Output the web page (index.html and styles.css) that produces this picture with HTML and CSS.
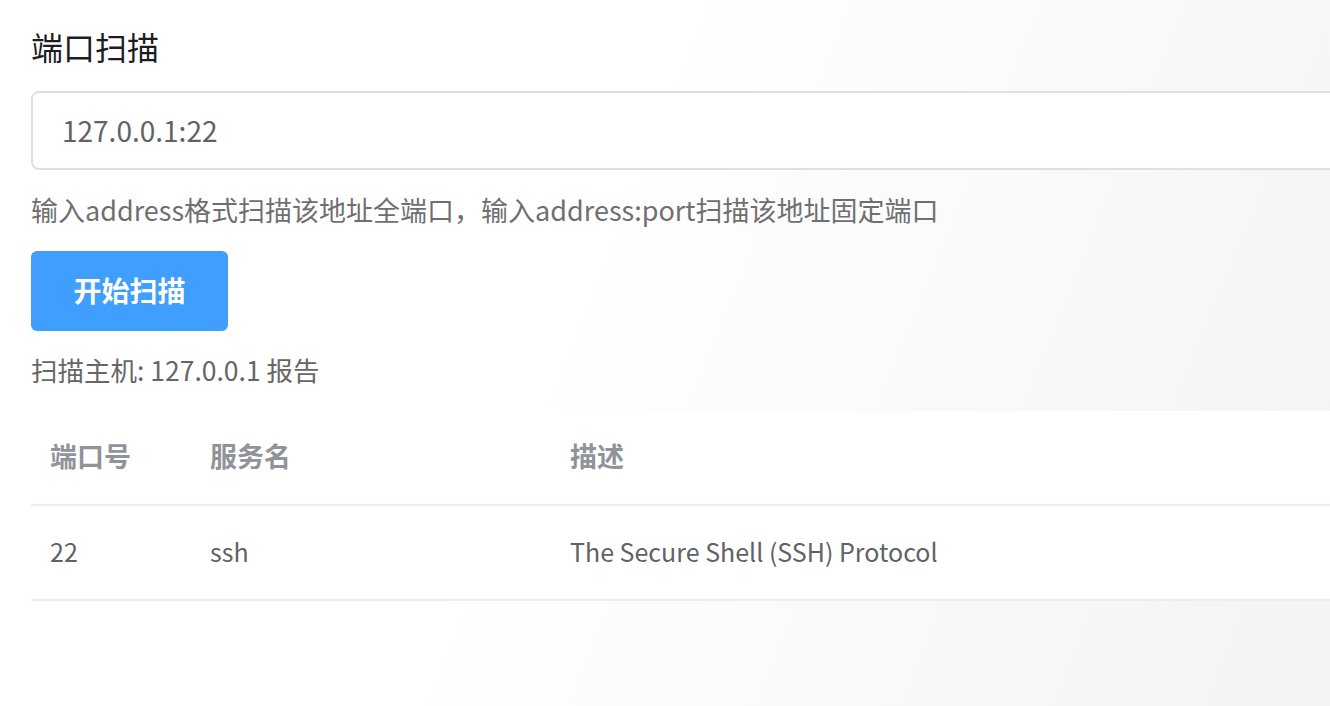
FILE: index.html
```html
<!DOCTYPE html>
<html lang="zh-CN">
<head>
<meta charset="utf-8">
<title>端口扫描</title>
<link rel="stylesheet" href="styles.css">
</head>
<body>
<main class="page">
  <h1 class="title">端口扫描</h1>
  <div class="input-box">
    <input class="input" type="text" value="127.0.0.1:22">
  </div>
  <p class="hint">输入address格式扫描该地址全端口，输入address:port扫描该地址固定端口</p>
  <button class="btn" type="button">开始扫描</button>
  <p class="report">扫描主机: 127.0.0.1 报告</p>
  <table class="table">
    <thead>
      <tr>
        <th class="col-port">端口号</th>
        <th class="col-name">服务名</th>
        <th class="col-desc">描述</th>
      </tr>
    </thead>
    <tbody>
      <tr>
        <td>22</td>
        <td>ssh</td>
        <td>The Secure Shell (SSH) Protocol</td>
      </tr>
    </tbody>
  </table>
</main>
</body>
</html>
```

FILE: styles.css
```css
html, body {
  margin: 0;
  padding: 0;
  height: 100%;
}

body {
  overflow: hidden;
  font-family: "Noto Sans CJK SC", "Noto Sans", sans-serif;
  background: linear-gradient(112deg, #ffffff 0%, #ffffff 42%, #f9f9f9 70%, #f3f3f3 100%);
}

.page {
  width: 1420px;
  padding: 0 0 0 31px;
  display: flex;
  flex-direction: column;
  align-items: flex-start;
}

.title {
  margin: 24px 0 0;
  height: 44px;
  line-height: 44px;
  font-size: 32px;
  font-weight: 400;
  color: #1d1d1f;
}

.input-box {
  margin-top: 23px;
  width: 100%;
  box-sizing: border-box;
  height: 79px;
  border: 2px solid #dcdfe6;
  border-radius: 8px;
  background: #fff;
  display: flex;
  align-items: center;
}

.input {
  border: 0;
  outline: 0;
  background: transparent;
  padding: 0 0 2px 29px;
  width: 100%;
  font-family: "Noto Sans CJK SC", "Noto Sans", sans-serif;
  font-size: 28px;
  color: #606266;
}

.hint {
  margin: 20px 0 0;
  height: 40px;
  line-height: 40px;
  font-size: 27px;
  color: #6f6f6f;
}

.btn {
  margin-top: 21px;
  width: 197px;
  height: 80px;
  border: 0;
  border-radius: 6px;
  background: #409eff;
  color: #fff;
  font-family: "Noto Sans CJK SC", "Noto Sans", sans-serif;
  font-size: 28px;
  font-weight: 700;
  padding: 0 0 2px;
}

.report {
  margin: 19px 0 0;
  height: 40px;
  line-height: 40px;
  font-size: 26.5px;
  color: #666;
}

.table {
  margin-top: 21px;
  width: 100%;
  border-collapse: collapse;
  background: #fff;
  table-layout: fixed;
}

.col-port { width: 141px; }
.col-name { width: 341px; }

.table th,
.table td {
  text-align: left;
  padding: 0 0 4px 19px;
  border-bottom: 2px solid #ebeef5;
}

.table th {
  height: 89px;
  font-size: 27px;
  font-weight: 700;
  color: #909399;
}

.table td {
  height: 89px;
  font-size: 25px;
  color: #606266;
}
```
